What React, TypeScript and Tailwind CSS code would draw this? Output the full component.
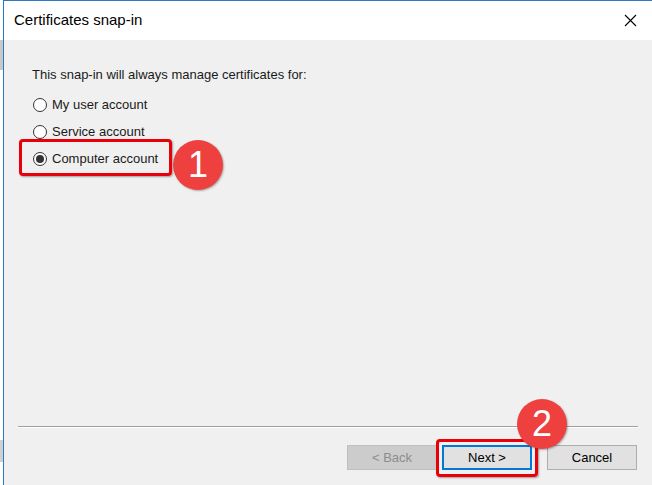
import React from 'react';

function Radio({ label, checked }: { label: string; checked?: boolean }) {
  return (
    <div className="flex items-center h-[27px]">
      <span className="flex items-center justify-center w-[14px] h-[14px] rounded-full border border-[#333333] bg-white">
        {checked && <span className="w-[8px] h-[8px] rounded-full bg-[#333333]" />}
      </span>
      <span className="ml-[5px] text-[13px] text-[#1a1a1a]">{label}</span>
    </div>
  );
}

export default function App() {
  return (
    <div
      className="relative w-[652px] h-[485px] flex bg-white overflow-hidden"
      style={{ fontFamily: '"Liberation Sans", Arial, sans-serif' }}
    >
      {/* Background window behind the dialog */}
      <div className="w-[3px] h-full bg-white flex flex-col">
        <div className="h-[40px]" />
        <div className="h-[30px] bg-[#c8c8c8]" />
        <div className="h-[370px]" />
        <div className="h-[22px] bg-[#d0d0d0]" />
      </div>

      {/* Dialog */}
      <div className="flex-1 flex flex-col border-l border-t border-[#2b79c2]">
        {/* Title bar */}
        <div className="h-[39px] bg-white flex items-center justify-between pl-[10px] pr-[14px]">
          <span className="text-[15px] text-black">Certificates snap-in</span>
          <svg width="13" height="13" viewBox="0 0 13 13" className="mr-[1px]">
            <path d="M1 1 L12 12 M12 1 L1 12" stroke="#000" strokeWidth="1.1" />
          </svg>
        </div>

        {/* Body */}
        <div className="flex-1 bg-[#f0f0f0] flex flex-col">
          <div className="pl-[28px] pt-[27px]">
            <p className="text-[13px] leading-[16px] text-[#1a1a1a]">
              This snap-in will always manage certificates for:
            </p>
            <div className="pl-[1px] mt-[8px] flex flex-col">
              <Radio label="My user account" />
              <Radio label="Service account" />
              <Radio label="Computer account" checked />
            </div>
          </div>

          <div className="flex-1" />

          {/* Separator */}
          <div className="ml-[14px] mr-[14px] border-t border-[#a0a0a0] border-b border-b-white" />

          {/* Buttons */}
          <div className="flex justify-end items-center gap-[5px] pr-[15px] pt-[17px] pb-[15px]">
            <button className="w-[90px] h-[25px] bg-[#cccccc] border border-[#bfbfbf] text-[13px] text-[#8c8c8c]">
              &lt; Back
            </button>
            <button className="w-[90px] h-[25px] bg-[#e1e1e1] border-2 border-[#0078d7] text-[13px] text-black">
              Next &gt;
            </button>
            <button className="ml-[10px] w-[90px] h-[25px] bg-[#e1e1e1] border border-[#adadad] text-[13px] text-black">
              Cancel
            </button>
          </div>
        </div>
      </div>

      {/* Annotation 1 */}
      <div className="absolute left-[19px] top-[139px] w-[153px] h-[37px] border-[3px] border-[#e8000b] rounded-[4px] shadow-[1px_1px_2px_rgba(0,0,0,0.35)]" />
      <div className="absolute left-[173px] top-[140px] w-[50px] h-[50px] rounded-full bg-[#ef4040] shadow-[1px_1px_2px_rgba(0,0,0,0.3)] flex items-center justify-center">
        <span className="text-white text-[36px] leading-none">1</span>
      </div>

      {/* Annotation 2 */}
      <div className="absolute left-[436px] top-[439px] w-[102px] h-[38px] border-[3px] border-[#e8000b] rounded-[4px] shadow-[1px_1px_2px_rgba(0,0,0,0.35)]" />
      <div className="absolute left-[517px] top-[399px] w-[50px] h-[50px] rounded-full bg-[#ef4040] shadow-[1px_1px_2px_rgba(0,0,0,0.3)] flex items-center justify-center">
        <span className="text-white text-[36px] leading-none">2</span>
      </div>
    </div>
  );
}
